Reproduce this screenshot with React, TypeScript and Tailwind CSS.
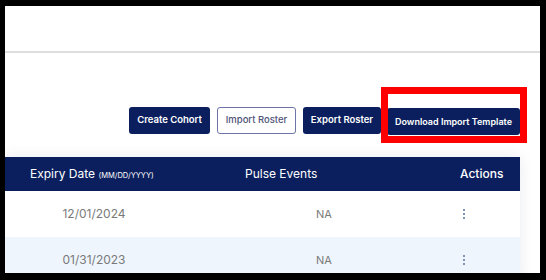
import React from "react";

const navy = "bg-[#0b1f5e]";

function Kebab() {
  return (
    <div className="flex flex-col gap-[2px]">
      <span className="block w-[2px] h-[2px] bg-[#7f93b8]" />
      <span className="block w-[2px] h-[2px] bg-[#7f93b8]" />
      <span className="block w-[2px] h-[2px] bg-[#7f93b8]" />
    </div>
  );
}

export default function App() {
  const rows = [
    { date: "12/01/2024", pulse: "NA", bg: "bg-white" },
    { date: "01/31/2023", pulse: "NA", bg: "bg-[#eef5fd]" },
  ];
  return (
    <div
      className="w-[546px] h-[280px] bg-black pt-[6px] pl-[5px] pr-[6px] pb-[7px]"
      style={{ fontFamily: "Inter, 'Noto Sans', sans-serif" }}
    >
      <div className="w-full h-full bg-white overflow-hidden flex flex-col">
        <div className="h-[45px] shrink-0 bg-white" />
        <div className="h-[2px] shrink-0 bg-[#dedede]" />
        <div className="flex-1 flex flex-col pt-[54px]">
          <div className="flex justify-end pr-[20px] gap-[7px] h-[27px]">
            <button className={`w-[81px] h-[27px] rounded-[3px] ${navy} text-white text-[9.5px] font-semibold`}>
              Create Cohort
            </button>
            <button className="w-[79px] h-[27px] rounded-[3px] bg-white border-[1.5px] border-[#6e73a8] text-[#4f5478] text-[9.5px] font-medium">
              Import Roster
            </button>
            <button className={`w-[78px] h-[27px] rounded-[3px] ${navy} text-white text-[9.5px] font-semibold`}>
              Export Roster
            </button>
            <div className="relative ml-[-1px]">
              <button className={`w-[133px] h-[27px] rounded-[3px] ${navy} text-white text-[9px] font-semibold`}>
                Download Import Template
              </button>
              <div className="absolute left-[-6px] top-[-20px] w-[146px] h-[56px] border-[7px] border-[#ff0000]" />
            </div>
          </div>
          <div className="mt-[23px] w-[515px] shadow-[0_0_14px_rgba(20,30,90,0.09)]">
            <div className={`grid grid-cols-[178px_262px_1fr] h-[34px] items-center ${navy} text-white text-[12px]`}>
              <div className="pl-[25px] whitespace-nowrap">
                Expiry Date <span className="text-[7.5px]">(MM/DD/YYYY)</span>
              </div>
              <div className="pl-[62px]">Pulse Events</div>
              <div className="pl-[15px] font-medium">Actions</div>
            </div>
            {rows.map((r, i) => (
              <div
                key={i}
                className={`grid grid-cols-[178px_262px_1fr] h-[46px] items-center ${r.bg} text-[12px] text-[#7a7a7a]`}
              >
                <div className="text-center">{r.date}</div>
                <div className="pl-[133px] text-[11px]">{r.pulse}</div>
                <div className="pl-[18px] flex items-center">
                  <Kebab />
                </div>
              </div>
            ))}
          </div>
        </div>
      </div>
    </div>
  );
}
